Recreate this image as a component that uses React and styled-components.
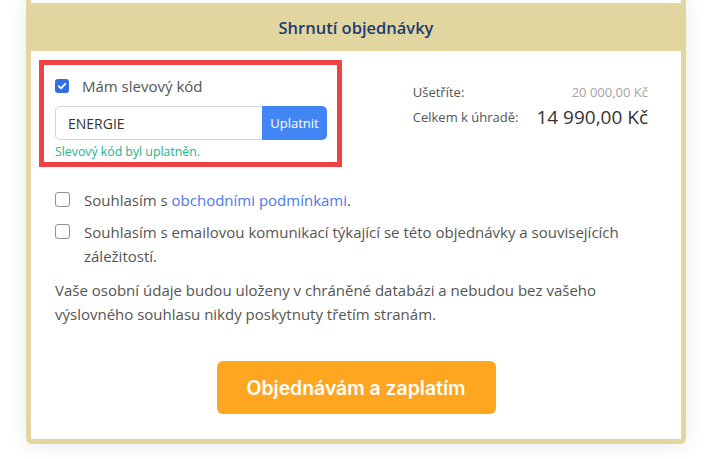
import React from "react";
import styled, { createGlobalStyle } from "styled-components";

const GlobalStyle = createGlobalStyle`
  html, body { margin: 0; padding: 0; background: #ffffff; }
  body { font-family: "Open Sans", "Noto Sans", sans-serif; color: #555; }
  * { box-sizing: border-box; }
`;

const Page = styled.div`
  width: 710px;
  height: 459px;
  padding-left: 26px;
  overflow: hidden;
  background: #fff;
`;

const Card = styled.div`
  width: 660px;
  border: 5px solid #e2d6a0;
  border-top: none;
  border-radius: 0 0 6px 6px;
  background: #fff;
  box-shadow: 0 0 22px rgba(0, 0, 0, 0.09);
`;

const PrevSection = styled.div`
  height: 3px;
  background: #fff;
`;

const Header = styled.div`
  height: 48px;
  background: #e2d6a0;
  display: flex;
  align-items: center;
  justify-content: center;
  font-size: 16.5px;
  font-weight: 600;
  color: #1f3b6f;
`;

const Body = styled.div`
  padding: 9px 33px 25px 24px;
  display: flex;
  flex-direction: column;
`;

const TopRow = styled.div`
  display: flex;
  justify-content: space-between;
  align-items: flex-start;
`;

const Highlight = styled.div`
  margin-left: -16px;
  width: 303px;
  border: 5px solid #f04242;
  padding: 9px 10px 0 11px;
  display: flex;
  flex-direction: column;
`;

const CheckRow = styled.label`
  display: flex;
  align-items: flex-start;
  gap: ${(p) => p.$gap || 14}px;
  font-size: 15px;
  line-height: 24px;
  color: #555;
  margin-top: ${(p) => p.$mt || 0}px;
`;

const Box = styled.span`
  flex: none;
  width: ${(p) => (p.$checked ? 14 : 15)}px;
  height: ${(p) => (p.$checked ? 14 : 15)}px;
  margin-top: ${(p) => (p.$checked ? 5 : 4)}px;
  border-radius: 3px;
  background: ${(p) => (p.$checked ? "#2f6fe0" : "#fff")};
  border: ${(p) => (p.$checked ? "none" : "1px solid #8e8e96")};
  display: flex;
  align-items: center;
  justify-content: center;
`;

const InputGroup = styled.div`
  display: flex;
  margin-top: 8px;
  height: 34px;
`;

const CodeInput = styled.div`
  flex: 1;
  border: 1px solid #d3d6de;
  border-right: none;
  border-radius: 5px 0 0 5px;
  padding-left: 12px;
  display: flex;
  align-items: center;
  font-size: 14px;
  color: #333;
`;

const ApplyButton = styled.button`
  width: 65px;
  border: none;
  border-radius: 0 5px 5px 0;
  background: #4286f5;
  color: #fff;
  font-family: inherit;
  font-size: 13px;
  padding: 0;
`;

const Success = styled.div`
  font-size: 12.3px;
  line-height: 20px;
  margin-top: 2px;
  color: #22b48c;
`;

const Summary = styled.div`
  margin-top: 22px;
  margin-left: 2px;
  display: grid;
  grid-template-columns: auto auto;
  column-gap: 18px;
  row-gap: 4px;
  align-items: center;
`;

const SumLabel = styled.div`
  font-size: 13px;
  line-height: 21px;
  color: #555;
`;

const SumValue = styled.div`
  text-align: right;
  font-size: ${(p) => (p.$big ? 19 : 13)}px;
  line-height: 21px;
  color: ${(p) => (p.$big ? "#333" : "#a4a4a4")};
`;

const Link = styled.a`
  color: #4f78e6;
  text-decoration: none;
`;

const Note = styled.p`
  margin: 10px 0 0;
  font-size: 15px;
  line-height: 24px;
  color: #555;
`;

const OrderButton = styled.button`
  align-self: center;
  margin-top: 35px;
  margin-left: 9px;
  width: 279px;
  height: 53px;
  border: none;
  border-radius: 6px;
  background: #ffa621;
  color: #fff;
  font-family: "Inter", sans-serif;
  font-weight: 600;
  font-size: 19.4px;
`;

const Check = () => (
  <svg width="10" height="10" viewBox="0 0 10 10">
    <path d="M1.8 5.2 L4 7.3 L8.3 2.8" fill="none" stroke="#fff" strokeWidth="1.8" strokeLinecap="round" strokeLinejoin="round" />
  </svg>
);

export default function App() {
  return (
    <>
      <GlobalStyle />
      <Page>
        <Card>
          <PrevSection />
          <Header>Shrnutí objednávky</Header>
          <Body>
            <TopRow>
              <Highlight>
                <CheckRow $gap={13}>
                  <Box $checked>
                    <Check />
                  </Box>
                  <span>Mám slevový kód</span>
                </CheckRow>
                <InputGroup>
                  <CodeInput>ENERGIE</CodeInput>
                  <ApplyButton>Uplatnit</ApplyButton>
                </InputGroup>
                <Success>Slevový kód byl uplatněn.</Success>
              </Highlight>
              <Summary>
                <SumLabel>Ušetříte:</SumLabel>
                <SumValue>20 000,00 Kč</SumValue>
                <SumLabel>Celkem k úhradě:</SumLabel>
                <SumValue $big>14 990,00 Kč</SumValue>
              </Summary>
            </TopRow>
            <CheckRow $mt={21}>
              <Box />
              <span>
                Souhlasím s <Link>obchodními podmínkami</Link>.
              </span>
            </CheckRow>
            <CheckRow $mt={8}>
              <Box />
              <span>
                Souhlasím s emailovou komunikací týkající se této objednávky a souvisejících záležitostí.
              </span>
            </CheckRow>
            <Note>
              Vaše osobní údaje budou uloženy v chráněné databázi a nebudou bez vašeho výslovného souhlasu nikdy poskytnuty třetím stranám.
            </Note>
            <OrderButton>Objednávám a zaplatím</OrderButton>
          </Body>
        </Card>
      </Page>
    </>
  );
}
